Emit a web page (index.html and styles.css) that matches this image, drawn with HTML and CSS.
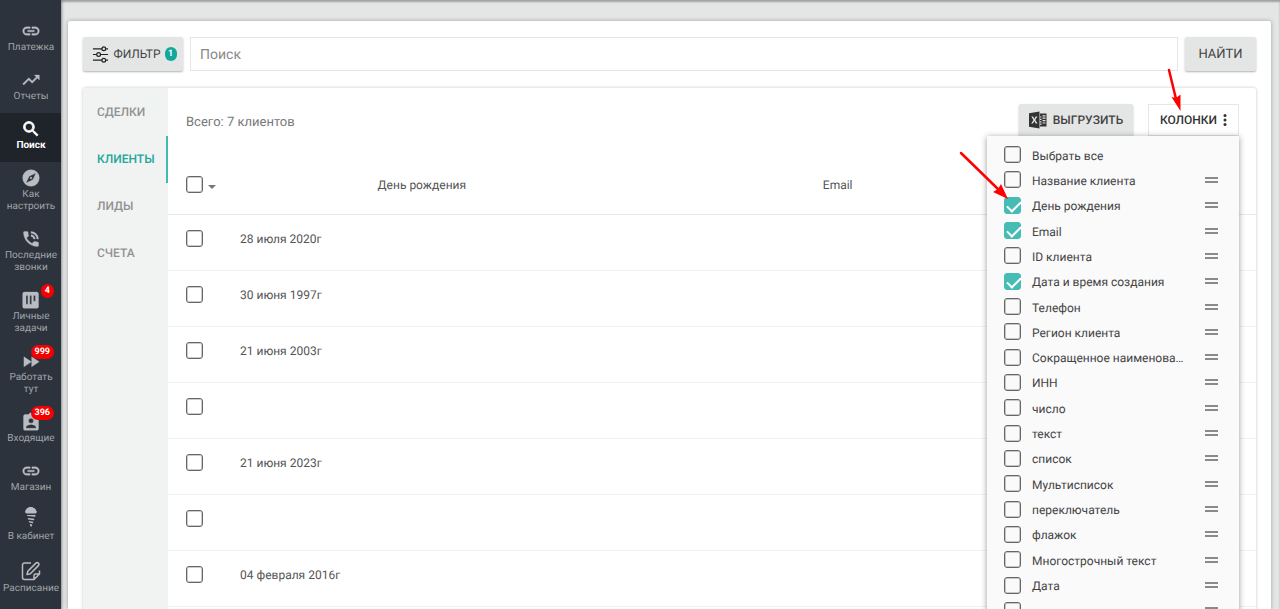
FILE: index.html
```html
<!DOCTYPE html>
<html lang="ru">
<head>
<meta charset="utf-8">
<title>Поиск</title>
<link rel="stylesheet" href="styles.css">
</head>
<body>
<div class="app">
  <nav class="sidebar">
    <a class="nav-item" href="#"><svg class="nav-icon" viewBox="0 0 24 24"><path d="M3.9 12c0-1.71 1.39-3.1 3.1-3.1h4V7H7a5 5 0 0 0 0 10h4v-1.9H7A3.1 3.1 0 0 1 3.9 12zM8 13h8v-2H8v2zm9-6h-4v1.9h4a3.1 3.1 0 0 1 0 6.2h-4V17h4a5 5 0 0 0 0-10z"/></svg><span>Платежка</span></a>
    <a class="nav-item" href="#"><svg class="nav-icon" viewBox="0 0 24 24"><path d="M16 6l2.29 2.29-4.88 4.88-4-4L2 16.59 3.41 18l6-6 4 4 6.3-6.29L22 12V6z"/></svg><span>Отчеты</span></a>
    <a class="nav-item active" href="#"><svg class="nav-icon" viewBox="0 0 24 24"><path d="M15.5 14h-.79l-.28-.27A6.47 6.47 0 0 0 16 9.5 6.5 6.5 0 1 0 9.5 16c1.61 0 3.09-.59 4.23-1.57l.27.28v.79l5 4.99L20.49 19l-4.99-5zm-6 0a4.5 4.5 0 1 1 0-9 4.5 4.5 0 0 1 0 9z"/></svg><span>Поиск</span></a>
    <a class="nav-item" href="#"><svg class="nav-icon" viewBox="0 0 24 24"><path d="M12 10.9a1.1 1.1 0 1 0 0 2.2 1.1 1.1 0 0 0 0-2.2zM12 2a10 10 0 1 0 0 20 10 10 0 0 0 0-20zm2.19 12.19L6 18l3.81-8.19L18 6l-3.81 8.19z"/></svg><span>Как настроить</span></a>
    <a class="nav-item" href="#"><svg class="nav-icon" viewBox="0 0 24 24"><path d="M20 15.5c-1.25 0-2.45-.2-3.57-.57-.35-.11-.74-.03-1.02.24l-2.2 2.2a15.05 15.05 0 0 1-6.59-6.59l2.2-2.21c.28-.26.36-.65.25-1A11.36 11.36 0 0 1 8.5 4c0-.55-.45-1-1-1H4c-.55 0-1 .45-1 1 0 9.39 7.61 17 17 17 .55 0 1-.45 1-1v-3.5c0-.55-.45-1-1-1zM19 12h2a9 9 0 0 0-9-9v2a7 7 0 0 1 7 7zm-4 0h2a5 5 0 0 0-5-5v2a3 3 0 0 1 3 3z"/></svg><span>Последние звонки</span></a>
    <a class="nav-item" href="#"><svg class="nav-icon" viewBox="0 0 24 24"><path fill-rule="evenodd" d="M4 2.500h15a2 2 0 0 1 2 2V20a2 2 0 0 1-2 2H4a2 2 0 0 1-2-2V4.500a2 2 0 0 1 2-2zM6 6.500v10.500h2.300V6.500zm4.500 0v10.500h2.300V6.500zm4.500 0v7h2.300v-7z"/></svg><span>Личные задачи</span><b class="badge">4</b></a>
    <a class="nav-item" href="#"><svg class="nav-icon" viewBox="0 0 24 24"><path d="M3.500 19l9-6-9-6v12zm9.300-12v12l9-6-9-6z"/></svg><span>Работать тут</span><b class="badge">999</b></a>
    <a class="nav-item" href="#"><svg class="nav-icon" viewBox="0 0 24 24"><path fill-rule="evenodd" d="M19 3h-4.180a3 3 0 0 0-5.640 0H5a2 2 0 0 0-2 2v15c0 1.100.9 2 2 2h14a2 2 0 0 0 2-2V5a2 2 0 0 0-2-2zm-7 4.500a3 3 0 1 1 0 6 3 3 0 0 1 0-6zm6 12H6v-1.400c0-2 4-3.100 6-3.100s6 1.100 6 3.100z"/></svg><span>Входящие</span><b class="badge">396</b></a>
    <a class="nav-item" href="#"><svg class="nav-icon" viewBox="0 0 24 24"><path d="M3.900 12c0-1.710 1.390-3.100 3.100-3.100h4V7H7a5 5 0 0 0 0 10h4v-1.900H7A3.100 3.100 0 0 1 3.900 12zM8 13h8v-2H8v2zm9-6h-4v1.900h4a3.100 3.100 0 0 1 0 6.200h-4V17h4a5 5 0 0 0 0-10z"/></svg><span>Магазин</span></a>
    <a class="nav-item" href="#"><svg class="nav-icon cone" viewBox="0 0 20 20"><path d="M5.500 6.500a2 2 0 0 1-.6-3.500A3 3 0 0 1 7.200.8a3.200 3.200 0 0 1 5 0 3 3 0 0 1 2.700 2.400 1.800 1.800 0 0 1-.4 3.300z"/><path d="M5.800 7.900h8.800l-.5 1.800-7.800-.6zM6.600 10.900l6.800.8-.5 1.600-5.700-.9zM7.700 14l4.600.8-.5 1.500-3.500-.7zM8.800 16.900l2.500.6-.4 1.400c-.4.800-1.300.8-1.600 0z"/></svg><span>В кабинет</span></a>
    <a class="nav-item tall" href="#"><svg class="nav-icon line" viewBox="0 0 22 22"><path d="M11 3H4.500A2 2 0 0 0 2.500 5v12.500a2 2 0 0 0 2 2h9.500l5.500-5.500v-3.500M14 19v-3.500a1.500 1.500 0 0 1 1.500-1.500H19M7 14.500l.8-3.300L15.900 3.100a1.700 1.700 0 0 1 2.500 2.500L10.300 13.700z"/></svg><span>Расписание</span></a>
  </nav>

  <main class="workspace">
    <section class="page">
      <form class="search-bar">
        <button class="button filter" type="button"><svg class="filter-icon" viewBox="0 0 18 18"><path d="M1 3h10M15 3h2M1 9h4M9 9h8M1 15h10M15 15h2"/><circle cx="12.500" cy="3" r="2"/><circle cx="7" cy="9" r="2"/><circle cx="12.500" cy="15" r="2"/></svg>ФИЛЬТР<span class="count">1</span></button>
        <input class="search-input" type="text" placeholder="Поиск" aria-label="Поиск">
        <button class="button find" type="button">НАЙТИ</button>
      </form>

      <div class="results">
        <nav class="tabs">
          <a class="tab" href="#">СДЕЛКИ</a>
          <a class="tab current" href="#">КЛИЕНТЫ</a>
          <a class="tab" href="#">ЛИДЫ</a>
          <a class="tab" href="#">СЧЕТА</a>
        </nav>
        <div class="content">
          <div class="toolbar">
            <span class="total">Всего: 7 клиентов</span>
            <button class="button export" type="button"><svg class="excel-icon" viewBox="0 0 18 18"><path fill-rule="evenodd" d="M0 2.200L10.500.5v17L0 15.800zM2.300 5.500L4.500 9l-2.300 3.500h1.700L5.300 10l1.500 2.600h1.800L6.200 9l2.200-3.600H6.700L5.400 7.900 4.100 5.500z"/><path fill-rule="evenodd" d="M11 2.500h6.500v13H11v-1.700h1.500v-1.200H11v-1.200h1.500v-1.200H11V9h1.500V7.800H11V6.600h1.500V5.400H11zm2.500 1.700v1.200h3V4.200zm0 2.400v1.200h3V6.600zm0 2.400v1.200h3V9zm0 2.400v1.200h3v-1.200z"/></svg>ВЫГРУЗИТЬ</button>
            <div class="columns">
              <button class="columns-button" type="button">КОЛОНКИ<svg class="dots" viewBox="0 0 4 14"><circle cx="2" cy="2.500" r="1.500"/><circle cx="2" cy="7" r="1.500"/><circle cx="2" cy="11.500" r="1.500"/></svg></button>
              <ul class="columns-menu">
                <li><label><input class="check" type="checkbox"><span>Выбрать все</span></label></li>
                <li><label><input class="check" type="checkbox"><span>Название клиента</span></label><i class="grip"></i></li>
                <li><label><input class="check" type="checkbox" checked><span>День рождения</span></label><i class="grip"></i></li>
                <li><label><input class="check" type="checkbox" checked><span>Email</span></label><i class="grip"></i></li>
                <li><label><input class="check" type="checkbox"><span>ID клиента</span></label><i class="grip"></i></li>
                <li><label><input class="check" type="checkbox" checked><span>Дата и время создания</span></label><i class="grip"></i></li>
                <li><label><input class="check" type="checkbox"><span>Телефон</span></label><i class="grip"></i></li>
                <li><label><input class="check" type="checkbox"><span>Регион клиента</span></label><i class="grip"></i></li>
                <li><label><input class="check" type="checkbox"><span>Сокращенное наименова…</span></label><i class="grip"></i></li>
                <li><label><input class="check" type="checkbox"><span>ИНН</span></label><i class="grip"></i></li>
                <li><label><input class="check" type="checkbox"><span>число</span></label><i class="grip"></i></li>
                <li><label><input class="check" type="checkbox"><span>текст</span></label><i class="grip"></i></li>
                <li><label><input class="check" type="checkbox"><span>список</span></label><i class="grip"></i></li>
                <li><label><input class="check" type="checkbox"><span>Мультисписок</span></label><i class="grip"></i></li>
                <li><label><input class="check" type="checkbox"><span>переключатель</span></label><i class="grip"></i></li>
                <li><label><input class="check" type="checkbox"><span>флажок</span></label><i class="grip"></i></li>
                <li><label><input class="check" type="checkbox"><span>Многострочный текст</span></label><i class="grip"></i></li>
                <li><label><input class="check" type="checkbox"><span>Дата</span></label><i class="grip"></i></li>
                <li><label><input class="check" type="checkbox"></label><i class="grip"></i></li>
              </ul>
              <svg class="arrow arrow-button" viewBox="0 0 20 50"><path class="shaft" d="M5 5l7 29"/><path class="head" d="M16.500 46L7.500 32l4.500 1 4.500-3.500z"/></svg>
              <svg class="arrow arrow-row" viewBox="0 0 56 56"><path class="shaft" d="M5 5l38 37"/><path class="head" d="M52 51l-15-7 5-3 3-5z"/></svg>
            </div>
          </div>
          <table class="clients">
            <colgroup><col class="col-select"><col class="col-birthday"><col class="col-email"><col></colgroup>
            <thead><tr><th><div class="select-all"><input class="check" type="checkbox"><i class="caret"></i></div></th><th>День рождения</th><th>Email</th><th></th></tr></thead>
            <tbody>
              <tr><td><input class="check" type="checkbox"></td><td>28 июля 2020г</td><td></td><td></td></tr>
              <tr><td><input class="check" type="checkbox"></td><td>30 июня 1997г</td><td></td><td></td></tr>
              <tr><td><input class="check" type="checkbox"></td><td>21 июня 2003г</td><td></td><td></td></tr>
              <tr><td><input class="check" type="checkbox"></td><td></td><td></td><td></td></tr>
              <tr><td><input class="check" type="checkbox"></td><td>21 июня 2023г</td><td></td><td></td></tr>
              <tr><td><input class="check" type="checkbox"></td><td></td><td></td><td></td></tr>
              <tr><td><input class="check" type="checkbox"></td><td>04 февраля 2016г</td><td></td><td></td></tr>
            </tbody>
          </table>
        </div>
      </div>
    </section>
  </main>
</div>
</body>
</html>
```

FILE: styles.css
```css
* { box-sizing: border-box; }

body {
  margin: 0;
  font-family: Roboto, "Noto Sans", sans-serif;
  font-size: 12px;
  color: #555;
  text-rendering: geometricPrecision;
}

a { color: inherit; text-decoration: none; }

button, input {
  font-family: inherit;
  text-rendering: inherit;
}

.app {
  display: flex;
  height: 100vh;
  overflow: hidden;
  background: #e4e6e6;
}

/* Sidebar */
.sidebar {
  flex: none;
  width: 61px;
  padding-top: 15px;
  background: #2d333c;
  box-shadow: 1px 0 3px rgba(0, 0, 0, 0.3);
}

.nav-item {
  position: relative;
  display: flex;
  flex-direction: column;
  align-items: center;
  padding: 6px 3px 10px 4px;
  gap: 1px;
  font-size: 10px;
  line-height: 12px;
  text-align: center;
  color: #a0a4a9;
}

.nav-item.active {
  background: #1f232a;
  color: #fff;
  font-weight: 700;
}

.nav-icon {
  width: 20px;
  height: 20px;
  fill: #b9bdc2;
  stroke: #b9bdc2;
  stroke-width: 0.4;
}

.active .nav-icon {
  fill: #fff;
  stroke: #fff;
  stroke-width: 1;
}

.nav-icon.cone {
  margin: -3px 0 3px;
  stroke: none;
}

.tall { padding-top: 7px; }

.tall .nav-icon {
  width: 22px;
  height: 22px;
}

.nav-icon.line {
  fill: none;
  stroke-width: 1.5;
  stroke-linejoin: round;
}

.badge {
  position: absolute;
  top: 0;
  right: 7px;
  min-width: 13px;
  padding: 0 4px;
  border-radius: 7px;
  background: #f40000;
  color: #fff;
  font-size: 9px;
  line-height: 14px;
}

/* Page */
.workspace {
  flex: 1;
  min-width: 0;
  padding: 21px 9px 0 7px;
  box-shadow: inset 0 2px 2px rgba(0, 0, 0, 0.3);
}

.page {
  height: 100%;
  padding: 16px 15px 0;
  border-radius: 2px 2px 0 0;
  background: #fff;
  box-shadow: 0 0 4px rgba(0, 0, 0, 0.3);
}

.search-bar {
  display: flex;
  gap: 7px;
  margin-bottom: 17px;
}

.button {
  display: flex;
  align-items: center;
  justify-content: center;
  border: 0;
  border-radius: 2px;
  background: #e4e6e6;
  box-shadow: 0 1px 2px rgba(0, 0, 0, 0.3);
  color: #444;
}

.filter {
  width: 100px;
  height: 34px;
  padding: 0 0 0 3px;
  gap: 4px;
  font-size: 12px;
}

.filter-icon {
  width: 17px;
  height: 17px;
  fill: #e4e6e6;
  stroke: #222;
  stroke-width: 1.3;
}

.count {
  width: 12px;
  border-radius: 6px;
  background: #12a79d;
  color: #fff;
  font-size: 9px;
  font-weight: 700;
  line-height: 14px;
}

.search-input {
  flex: 1;
  min-width: 0;
  height: 34px;
  padding: 1px 9px 0;
  border: 1px solid #e4e6e6;
  background: #fff;
  font-size: 14px;
}

.search-input::placeholder { color: #888; }

.find {
  width: 71px;
  height: 34px;
  font-size: 13px;
}

.results {
  display: flex;
  height: 100%;
  border-radius: 2px;
  box-shadow: 0 0 3px rgba(0, 0, 0, 0.25);
}

.tabs {
  flex: none;
  width: 85px;
  padding-top: 1px;
  background: #f1f3f2;
}

.tab {
  display: block;
  padding-left: 14px;
  border-right: 2px solid transparent;
  font-size: 12px;
  line-height: 47px;
  font-weight: 500;
  color: #929292;
}

.tab.current {
  border-color: #43b9b0;
  color: #22a699;
}

.content {
  flex: 1;
  min-width: 0;
}

.toolbar {
  display: flex;
  gap: 15px;
  padding: 16px 17px 14px 18px;
}

.total {
  flex: 1;
  line-height: 37px;
  font-size: 13px;
  color: #777;
}

.export {
  width: 114px;
  height: 32px;
  padding: 0;
  gap: 6px;
  font-size: 12px;
  font-weight: 500;
}

.excel-icon {
  width: 18px;
  height: 18px;
  fill: #333;
}

.columns { position: relative; }

.columns-button {
  display: flex;
  align-items: center;
  justify-content: center;
  gap: 6px;
  width: 91px;
  height: 32px;
  padding: 0;
  border: 1px solid #e6e6e6;
  background: #fff;
  color: #333;
  font-size: 12px;
  font-weight: 500;
}

.dots {
  width: 4px;
  height: 14px;
  fill: #333;
}

.columns-menu {
  position: absolute;
  top: 32px;
  right: 0;
  display: grid;
  grid-template-rows: repeat(19, 1fr);
  width: 252px;
  height: 494px;
  margin: 0;
  padding: 6px 21px 7px 17px;
  background: #fafafa;
  box-shadow: 0 1px 6px rgba(0, 0, 0, 0.4);
  list-style: none;
  color: #444;
}

.columns-menu li {
  display: flex;
  align-items: center;
  justify-content: space-between;
}

.columns-menu label {
  display: flex;
  align-items: center;
  gap: 11px;
}

.columns-menu span { padding-top: 2px; }

.grip {
  width: 13px;
  height: 6px;
  border: solid #8a8a8a;
  border-width: 2px 0;
}

.check {
  display: block;
  width: 17px;
  height: 17px;
  margin: 0;
  border: 1px solid #666;
  border-radius: 3px;
  box-shadow: inset 0 0 0 1px rgba(0, 0, 0, 0.2);
  appearance: none;
}

.check:checked {
  border-color: #45bcb4;
  background: #45bcb4;
  box-shadow: none;
}

.check:checked::after {
  content: "";
  display: block;
  width: 12px;
  height: 6px;
  margin: 3px 0 0 2px;
  border: solid #fff;
  border-width: 0 0 2px 2px;
  transform: rotate(-45deg);
}

/* Pointers drawn over the page */
.arrow { position: absolute; }

.arrow-button {
  top: -39px;
  left: 16px;
  width: 20px;
  height: 50px;
}

.arrow-row {
  top: 44px;
  right: 227px;
  width: 56px;
  height: 56px;
}

.shaft {
  fill: none;
  stroke: #f00;
  stroke-width: 2.5;
  stroke-linecap: round;
}

.head { fill: #f00; }

/* Table */
.clients {
  width: 100%;
  border-spacing: 0;
  table-layout: fixed;
}

.col-select { width: 58px; }
.col-birthday { width: 36%; }
.col-email { width: 440px; }

.clients th {
  height: 60px;
  padding: 0;
  border-bottom: 1px solid #e6e8e8;
  font-weight: 400;
}

.clients td {
  height: 56px;
  padding: 0 14px 8px;
  border-bottom: 1px solid #f2f2f2;
}

.clients td:first-child,
.clients th:first-child { padding-left: 18px; }

.select-all {
  display: flex;
  align-items: center;
  gap: 5px;
}

.caret {
  margin-top: 4px;
  border: 4px solid transparent;
  border-top-color: #777;
  border-bottom: 0;
}
```
